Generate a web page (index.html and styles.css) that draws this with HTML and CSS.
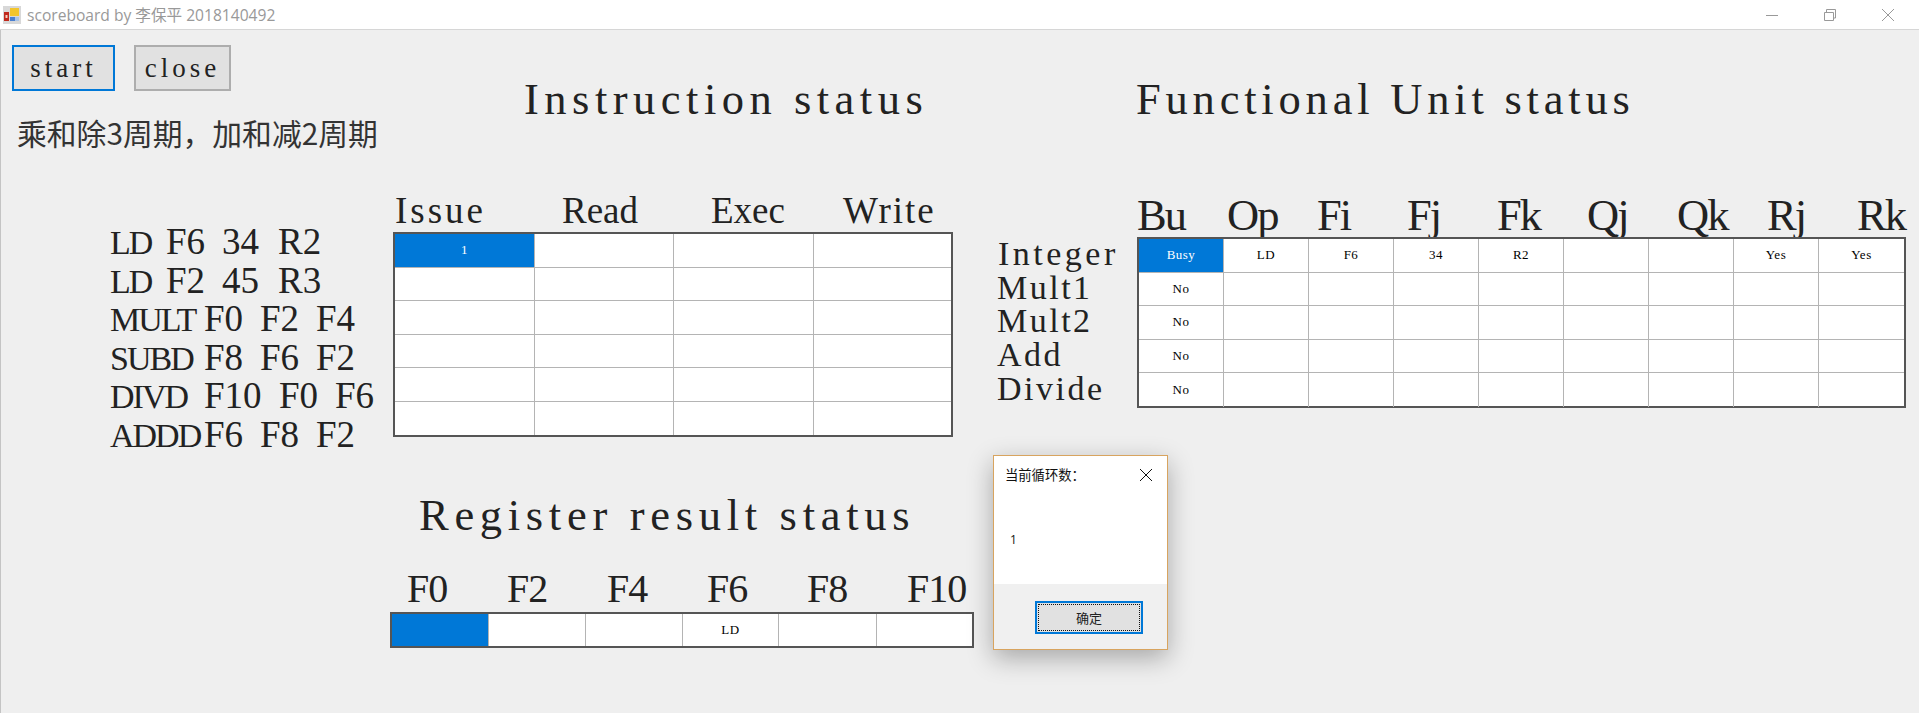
FILE: index.html
```html
<!DOCTYPE html>
<html lang="zh-CN">
<head>
    <meta charset="UTF-8">
    <title>scoreboard by 李保平 2018140492</title>
    <link rel="stylesheet" href="styles.css">
</head>
<body>
    <header class="titlebar">
        <svg class="app-icon" width="18" height="18" viewBox="0 0 18 18">
            <rect width="18" height="18" fill="#d8d8d8"/>
            <rect x="1" y="6" width="5" height="9" fill="#c0281c"/>
            <rect x="2.500" y="9" width="2" height="3" fill="#f4d0c0"/>
            <rect x="7" y="2" width="9" height="8" fill="#f2c52c"/>
            <rect x="7" y="11" width="5" height="4" fill="#4a7fd0"/>
            <rect x="12" y="11" width="4" height="4" fill="#a9c4e8"/>
        </svg>
        <span class="app-title">scoreboard by 李保平 2018140492</span>
        <div class="win-controls">
            <svg width="14" height="14" viewBox="0 0 14 14"><path d="M1 7.500H13" stroke="#999" fill="none"/></svg>
            <svg width="14" height="14" viewBox="0 0 14 14"><path d="M1.500 4.500H10.500V12.500H1.500ZM3.500 4.500V1.500H12.500V10H10.500" stroke="#999" fill="none"/></svg>
            <svg width="14" height="14" viewBox="0 0 14 14"><path d="M1 1L13 13M13 1L1 13" stroke="#999" fill="none"/></svg>
        </div>
    </header>

    <main class="window">
        <section class="left">
            <div class="top">
                <div class="controls">
                    <div class="buttons">
                        <button class="btn btn-focus">start</button>
                        <button class="btn">close</button>
                    </div>
                    <p class="note">乘和除3周期，加和减2周期</p>
                </div>
                <h2 class="heading heading-instr">Instruction status</h2>
            </div>

            <div class="instr">
                <ul class="instr-list">
                    <li><span class="op w3">LD</span><span class="w3">F6</span><span class="w3">34</span><span>R2</span></li>
                    <li><span class="op w3">LD</span><span class="w3">F2</span><span class="w3">45</span><span>R3</span></li>
                    <li><span class="op w5">MULT</span><span class="w3">F0</span><span class="w3">F2</span><span>F4</span></li>
                    <li><span class="op w5">SUBD</span><span class="w3">F8</span><span class="w3">F6</span><span>F2</span></li>
                    <li><span class="op w5">DIVD</span><span class="w4">F10</span><span class="w3">F0</span><span>F6</span></li>
                    <li><span class="op w5">ADDD</span><span class="w3">F6</span><span class="w3">F8</span><span>F2</span></li>
                </ul>
                <div>
                    <div class="instr-head">
                        <span>Issue</span><span>Read</span><span>Exec</span><span>Write</span>
                    </div>
                    <div class="grid grid-instr">
                        <div class="cell selected">1</div><div class="cell"></div><div class="cell"></div><div class="cell"></div>
                        <div class="cell"></div><div class="cell"></div><div class="cell"></div><div class="cell"></div>
                        <div class="cell"></div><div class="cell"></div><div class="cell"></div><div class="cell"></div>
                        <div class="cell"></div><div class="cell"></div><div class="cell"></div><div class="cell"></div>
                        <div class="cell"></div><div class="cell"></div><div class="cell"></div><div class="cell"></div>
                        <div class="cell"></div><div class="cell"></div><div class="cell"></div><div class="cell"></div>
                    </div>
                </div>
            </div>

            <div class="register">
                <h2 class="heading heading-reg">Register result status</h2>
                <div class="reg-head">
                    <span>F0</span><span>F2</span><span>F4</span><span>F6</span><span>F8</span><span>F10</span>
                </div>
                <div class="grid grid-reg">
                    <div class="cell selected"></div><div class="cell"></div><div class="cell"></div><div class="cell">LD</div><div class="cell"></div><div class="cell"></div>
                </div>
            </div>
        </section>

        <section class="right">
            <h2 class="heading heading-fu">Functional Unit status</h2>
            <div class="fu-head">
                <span>Bu</span><span>Op</span><span>Fi</span><span>Fj</span><span>Fk</span><span>Qj</span><span>Qk</span><span>Rj</span><span>Rk</span>
            </div>
            <div class="fu-body">
                <ul class="fu-labels">
                    <li class="first">Integer</li>
                    <li>Mult1</li>
                    <li>Mult2</li>
                    <li>Add</li>
                    <li>Divide</li>
                </ul>
                <div class="grid grid-fu">
                    <div class="cell selected">Busy</div><div class="cell">LD</div><div class="cell">F6</div><div class="cell">34</div><div class="cell">R2</div><div class="cell"></div><div class="cell"></div><div class="cell">Yes</div><div class="cell">Yes</div>
                    <div class="cell">No</div><div class="cell"></div><div class="cell"></div><div class="cell"></div><div class="cell"></div><div class="cell"></div><div class="cell"></div><div class="cell"></div><div class="cell"></div>
                    <div class="cell">No</div><div class="cell"></div><div class="cell"></div><div class="cell"></div><div class="cell"></div><div class="cell"></div><div class="cell"></div><div class="cell"></div><div class="cell"></div>
                    <div class="cell">No</div><div class="cell"></div><div class="cell"></div><div class="cell"></div><div class="cell"></div><div class="cell"></div><div class="cell"></div><div class="cell"></div><div class="cell"></div>
                    <div class="cell">No</div><div class="cell"></div><div class="cell"></div><div class="cell"></div><div class="cell"></div><div class="cell"></div><div class="cell"></div><div class="cell"></div><div class="cell"></div>
                </div>
            </div>
        </section>

        <div class="dialog">
            <div class="dialog-body">
                <div class="dialog-title">
                    <span>当前循环数：</span>
                    <svg width="14" height="14" viewBox="0 0 14 14"><path d="M1 1L13 13M13 1L1 13" stroke="#111" fill="none"/></svg>
                </div>
                <p class="dialog-text">1</p>
            </div>
            <div class="dialog-foot">
                <button class="ok"><span>确定</span></button>
            </div>
        </div>
    </main>
</body>
</html>
```

FILE: styles.css
```css
* {
    box-sizing: border-box;
}

html, body {
    height: 100%;
}

body {
    margin: 0;
    background-color: #efefef;
    color: #222;
    font-family: "Liberation Serif", "Noto Sans CJK SC", serif;
    overflow: hidden;
}

ul {
    list-style: none;
    margin: 0;
    padding: 0;
}

/* title bar */
.titlebar {
    display: flex;
    align-items: center;
    height: 30px;
    padding-left: 3px;
    background: #fff;
    border-bottom: 1px solid #d6d6d6;
}

.app-icon {
    margin-right: 6px;
}

.app-title {
    font-family: "Open Sans", "Noto Sans CJK SC", sans-serif;
    font-size: 15.600px;
    color: #999;
}

.win-controls {
    display: flex;
    gap: 44px;
    margin-left: auto;
    margin-right: 24px;
}

/* window */
.window {
    position: relative;
    display: flex;
    height: calc(100% - 30px);
    border-left: 1px solid #c4c4c4;
}

.left {
    width: 1135px;
    flex: none;
}

.top {
    display: flex;
    height: 160px;
}

.controls {
    width: 523px;
    padding: 15px 0 0 11px;
}

.buttons {
    display: flex;
    gap: 19px;
}

.btn {
    width: 97px;
    height: 46px;
    padding: 0;
    background: #e1e1e1;
    border: 2px solid #adadad;
    color: #222;
    font-family: "Liberation Serif", serif;
    font-size: 27px;
    letter-spacing: 4px;
}

.btn-focus {
    width: 103px;
    border-color: #0078d7;
}

.note {
    margin: 25px 0 0 5px;
    font-family: "Noto Sans CJK SC", sans-serif;
    font-size: 29.800px;
    line-height: 32px;
    color: #333;
    white-space: nowrap;
}

.heading {
    margin: 0;
    font-size: 44.500px;
    font-weight: normal;
    line-height: 50px;
    letter-spacing: 5.500px;
    white-space: nowrap;
}

.heading-instr {
    margin-top: 44px;
}

/* instruction list and table */
.instr {
    display: flex;
    height: 247px;
}

.instr-list {
    flex: none;
    width: 283px;
    margin: 33px 0 0 109px;
    padding: 0;
    font-size: 37px;
    line-height: 37.500px;
    white-space: nowrap;
}

.instr-list span {
    display: inline-block;
}

.instr-list .op {
    font-size: 34px;
    letter-spacing: -2px;
}

.instr-list .w3 {
    width: 56px;
}

.instr-list .w4 {
    width: 75px;
}

.instr-list .w5 {
    width: 94px;
}

.instr-head {
    display: flex;
    height: 42px;
    font-size: 37px;
    line-height: 42px;
}

.instr-head span:nth-child(1) {
    width: 167px;
    margin-left: 2px;
    letter-spacing: 3px;
}

.instr-head span:nth-child(2) {
    width: 149px;
}

.instr-head span:nth-child(3) {
    width: 132px;
}

.instr-head span:nth-child(4) {
    letter-spacing: 2px;
}

.grid {
    display: grid;
    background: #fff;
    border: 2px solid #555;
}

.cell {
    display: flex;
    align-items: center;
    justify-content: center;
    min-width: 0;
    border-right: 1px solid #b4b4b4;
    border-bottom: 1px solid #b4b4b4;
    color: #000;
    font-family: "Liberation Serif", serif;
    font-size: 13px;
    letter-spacing: 0.500px;
}

.selected {
    background: #0078d7;
    color: #fff;
}

.grid-instr {
    width: 560px;
    grid-template-columns: 140px 139px 140px 137px;
    grid-auto-rows: 33.500px;
}

.grid-instr .cell:nth-child(4n) {
    border-right: 0;
}

.grid-instr .cell:nth-last-child(-n+4) {
    border-bottom: 0;
}

/* register result */
.register {
    padding-top: 53px;
}

.heading-reg {
    margin-left: 418px;
    letter-spacing: 5.700px;
}

.reg-head {
    display: flex;
    height: 72px;
    margin-left: 406px;
    padding-top: 29px;
    font-size: 40px;
    line-height: 40px;
    letter-spacing: -1px;
}

.reg-head span {
    width: 100px;
    flex: none;
}

.grid-reg {
    width: 584px;
    height: 36px;
    margin-left: 389px;
    grid-template-columns: 97px 97px 97px 96px 98px 95px;
    grid-auto-rows: 32px;
}

.grid-reg .cell {
    border-bottom: 0;
}

.grid-reg .cell:last-child {
    border-right: 0;
}

/* functional unit */
.right {
    flex: 1;
    min-width: 0;
}

.heading-fu {
    margin-top: 44px;
    letter-spacing: 4.800px;
}

.fu-head {
    display: flex;
    height: 113px;
    margin-left: 1px;
    padding-top: 69px;
    font-size: 44.500px;
    line-height: 44px;
    letter-spacing: -2px;
}

.fu-head span {
    width: 90px;
    flex: none;
}

.fu-body {
    display: flex;
    margin-left: -139px;
}

.fu-labels {
    flex: none;
    width: 140px;
    font-size: 34px;
    line-height: 33.700px;
    letter-spacing: 2.500px;
    white-space: nowrap;
}

.fu-labels .first {
    margin-left: 1px;
    letter-spacing: 3.500px;
}

.grid-fu {
    flex: none;
    width: 769px;
    height: 171px;
    grid-template-columns: repeat(8, 85px) 85px;
    grid-auto-rows: 33.500px;
}

.grid-fu .cell:nth-child(9n) {
    border-right: 0;
}

.grid-fu .cell:nth-last-child(-n+9) {
    border-bottom: 0;
}

/* message box */
.dialog {
    position: absolute;
    left: 992px;
    top: 425px;
    display: flex;
    flex-direction: column;
    width: 175px;
    height: 195px;
    background: #f0f0f0;
    border: 1px solid #d8a45f;
    box-shadow: 0 8px 24px rgba(0, 0, 0, 0.3);
    font-family: "Noto Sans CJK SC", sans-serif;
    color: #111;
}

.dialog-body {
    height: 128px;
    background: #fff;
}

.dialog-title {
    display: flex;
    justify-content: space-between;
    align-items: center;
    padding: 12px 14px 0 11px;
    font-size: 13.300px;
    line-height: 14px;
}

.dialog-text {
    margin: 50px 0 0 16px;
    font-family: "Open Sans", sans-serif;
    font-size: 12px;
    line-height: 16px;
}

.dialog-foot {
    padding: 17px 0 0 41px;
}

.ok {
    display: block;
    width: 108px;
    height: 33px;
    padding: 1px;
    background: #e1e1e1;
    border: 2px solid #0078d7;
    font-family: "Noto Sans CJK SC", sans-serif;
    font-size: 13px;
    color: #222;
}

.ok span {
    display: flex;
    align-items: center;
    justify-content: center;
    height: 100%;
    border: 1px dotted #111;
}
```
